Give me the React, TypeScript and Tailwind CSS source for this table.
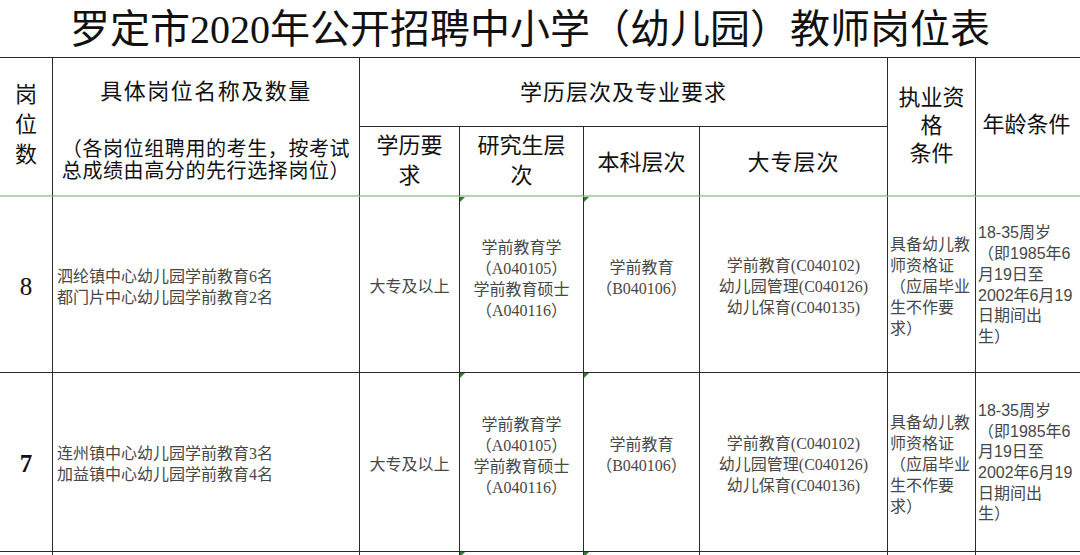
import * as React from "react";

const serif = "font-['Liberation_Serif','Noto_Sans_CJK_SC',serif]";
const sans = "font-['Liberation_Sans','Noto_Sans_CJK_SC',sans-serif]";

const line = "border-r border-b border-[#2a2a2a]";
const headGreen = "border-r border-b-2 border-r-[#2a2a2a] border-b-[#b7cfb3]";

function Flag() {
  return (
    <span className="absolute left-0 top-0 h-0 w-0 border-t-[5px] border-r-[5px] border-t-[#2f7d32] border-r-transparent" />
  );
}

interface RowData {
  num: string;
  bold: boolean;
  posts: string[];
  rowStart: string;
  zhuanke: string[];
}

const rows: RowData[] = [
  {
    num: "8",
    bold: false,
    posts: ["泗纶镇中心幼儿园学前教育6名", "都门片中心幼儿园学前教育2名"],
    rowStart: "row-start-3",
    zhuanke: ["学前教育(C040102)", "幼儿园管理(C040126)", "幼儿保育(C040135)"],
  },
  {
    num: "7",
    bold: true,
    posts: ["连州镇中心幼儿园学前教育3名", "加益镇中心幼儿园学前教育4名"],
    rowStart: "row-start-4",
    zhuanke: ["学前教育(C040102)", "幼儿园管理(C040126)", "幼儿保育(C040136)"],
  },
];

function BodyRow({ r }: { r: RowData }) {
  const body = `${serif} text-[16px] leading-[21px] text-[#474747]`;
  return (
    <>
      <div className={`${r.rowStart} col-start-1 ${line} flex items-center justify-center pt-[4px] ${serif} text-[25px] text-[#111] ${r.bold ? "font-bold" : "font-normal"}`}>
        {r.num}
      </div>
      <div className={`${r.rowStart} col-start-2 ${line} flex flex-col justify-center pl-[4px] pt-[4px] ${body} leading-[20px]`}>
        {r.posts.map((p) => (
          <div key={p}>{p}</div>
        ))}
      </div>
      <div className={`${r.rowStart} col-start-3 ${line} flex items-center justify-center pt-[4px] ${body}`}>
        大专及以上
      </div>
      <div className={`relative ${r.rowStart} col-start-4 ${line} flex flex-col items-center justify-center pb-[12px] ${body}`}>
        <Flag />
        <div>学前教育学</div>
        <div>（A040105）</div>
        <div>学前教育硕士</div>
        <div>（A040116）</div>
      </div>
      <div className={`relative ${r.rowStart} col-start-5 ${line} flex flex-col items-center justify-center pb-[14px] ${body}`}>
        <Flag />
        <div>学前教育</div>
        <div>（B040106）</div>
      </div>
      <div className={`${r.rowStart} col-start-6 ${line} flex flex-col items-center justify-center pt-[4px] ${body}`}>
        {r.zhuanke.map((z) => (
          <div key={z}>{z}</div>
        ))}
      </div>
      <div className={`${r.rowStart} col-start-7 ${line} flex flex-col justify-center pl-[2px] pt-[4px] ${body} leading-[20.5px]`}>
        <div>具备幼儿教</div>
        <div>师资格证</div>
        <div>（应届毕业</div>
        <div>生不作要</div>
        <div>求）</div>
      </div>
      <div className={`${r.rowStart} col-start-8 ${line} flex flex-col justify-center pl-[2px] pt-[2px] ${sans} text-[16px] leading-[20.7px] text-[#474747]`}>
        <div>18-35周岁</div>
        <div>（即1985年6</div>
        <div>月19日至</div>
        <div>2002年6月19</div>
        <div>日期间出</div>
        <div>生）</div>
      </div>
    </>
  );
}

export default function App() {
  const head = `${serif} text-[22px] text-[#111]`;
  return (
    <div className="h-[555px] w-[1080px] overflow-hidden bg-white">
      <div className={`flex h-[57px] items-center justify-center pr-[20px] pt-[2px] ${serif} text-[40px] leading-none text-[#111]`}>
        罗定市2020年公开招聘中小学（幼儿园）教师岗位表
      </div>
      <div className="grid w-[1082px] grid-cols-[53px_307px_100px_124px_116px_188px_88px_106px] grid-rows-[69px_70px_176px_179px_40px] border-t border-[#2a2a2a]">
        {/* header */}
        <div className={`row-span-2 row-start-1 col-start-1 ${headGreen} flex flex-col items-center justify-center pb-[4px] ${head} leading-[30px]`}>
          <div>岗</div>
          <div>位</div>
          <div>数</div>
        </div>
        <div className={`row-span-2 row-start-1 col-start-2 ${headGreen} flex flex-col items-center pt-[20px]`}>
          <div className={`${head} leading-[28px] tracking-[1.5px]`}>具体岗位名称及数量</div>
          <div className={`mt-[32px] ${serif} text-[20px] leading-[22px] tracking-[0.6px] text-[#111]`}>
            <div>（各岗位组聘用的考生，按考试</div>
            <div>总成绩由高分的先行选择岗位）</div>
          </div>
        </div>
        <div className={`row-start-1 col-start-3 col-span-4 ${line} flex items-center justify-center ${head} tracking-[1px]`}>
          学历层次及专业要求
        </div>
        <div className={`row-span-2 row-start-1 col-start-7 ${headGreen} flex flex-col items-center justify-center pb-[2px] ${head} leading-[28px]`}>
          <div>执业资</div>
          <div>格</div>
          <div>条件</div>
        </div>
        <div className={`row-span-2 row-start-1 col-start-8 ${headGreen} flex items-center justify-center pr-[4px] pb-[4px] ${head}`}>
          年龄条件
        </div>
        <div className={`row-start-2 col-start-3 ${headGreen} flex flex-col items-center justify-center ${head} leading-[30px]`}>
          <div>学历要</div>
          <div>求</div>
        </div>
        <div className={`row-start-2 col-start-4 ${headGreen} flex flex-col items-center justify-center ${head} leading-[30px]`}>
          <div>研究生层</div>
          <div>次</div>
        </div>
        <div className={`row-start-2 col-start-5 ${headGreen} flex items-center justify-center pt-[2px] ${head}`}>
          本科层次
        </div>
        <div className={`row-start-2 col-start-6 ${headGreen} flex items-center justify-center pt-[2px] ${head} tracking-[1px]`}>
          大专层次
        </div>

        {rows.map((r) => (
          <BodyRow key={r.num} r={r} />
        ))}

        {/* next row, cut off */}
        <div className="row-start-5 col-start-1 border-r border-[#2a2a2a]" />
        <div className="row-start-5 col-start-2 border-r border-[#2a2a2a]" />
        <div className="row-start-5 col-start-3 border-r border-[#2a2a2a]" />
        <div className="relative row-start-5 col-start-4 border-r border-[#2a2a2a]">
          <Flag />
        </div>
        <div className="relative row-start-5 col-start-5 border-r border-[#2a2a2a]">
          <Flag />
        </div>
        <div className="row-start-5 col-start-6 border-r border-[#2a2a2a]" />
        <div className="row-start-5 col-start-7 border-r border-[#2a2a2a]" />
        <div className="row-start-5 col-start-8 border-r border-[#2a2a2a]" />
      </div>
    </div>
  );
}
